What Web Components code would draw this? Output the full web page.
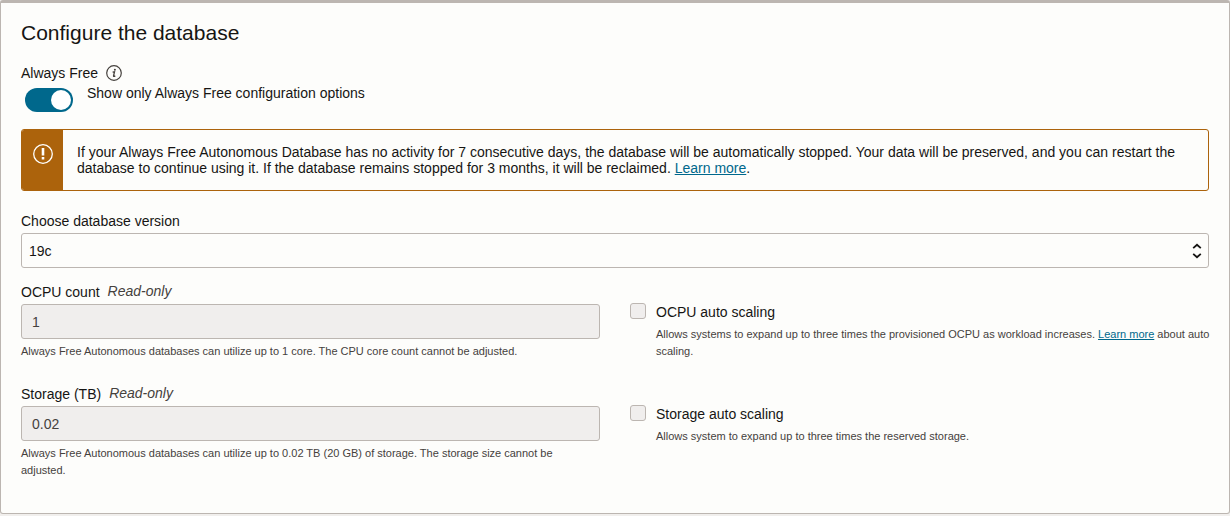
<!DOCTYPE html>
<html lang="en">
<head>
<meta charset="utf-8">
<title>Configure the database</title>
<style>
  body {
    margin: 0;
    background: #f1efed;
    color: #161513;
    font: 14px/16px "Liberation Sans", Arial, sans-serif;
    --panel: #fdfdfb;
    --line: #bcb6b1;
    --muted: #45413d;
    --link: #00688c;
    --disabled: #f0eeed;
    --warning: #ac630c;
  }
  a { color: var(--link); text-underline-offset: 1px; }
</style>
</head>
<body>
<config-panel>
  <span slot="title">Configure the database</span>
  <toggle-field>
    <span slot="label">Always Free</span>
    Show only Always Free configuration options
  </toggle-field>
  <warning-banner>If your Always Free Autonomous Database has no activity for 7 consecutive days, the database will be automatically stopped. Your data will be preserved, and you can restart the database to continue using it. If the database remains stopped for 3 months, it will be reclaimed. <a href="#reclaim">Learn more</a>.</warning-banner>
  <select-field options="19c">Choose database version</select-field>
  <field-grid>
    <readonly-field value="1">OCPU count
      <span slot="help">Always Free Autonomous databases can utilize up to 1 core. The CPU core count cannot be adjusted.</span>
    </readonly-field>
    <check-field>OCPU auto scaling
      <span slot="help">Allows systems to expand up to three times the provisioned OCPU as workload increases. <a href="#scaling">Learn more</a> about auto scaling.</span>
    </check-field>
    <readonly-field value="0.02">Storage (TB)
      <span slot="help">Always Free Autonomous databases can utilize up to 0.02 TB (20 GB) of storage. The storage size cannot be adjusted.</span>
    </readonly-field>
    <check-field>Storage auto scaling
      <span slot="help">Allows system to expand up to three times the reserved storage.</span>
    </check-field>
  </field-grid>
</config-panel>

<script>
const define = (name, html, setup) => {
  const template = document.createElement('template');
  template.innerHTML = html;
  customElements.define(name, class extends HTMLElement {
    constructor() {
      super();
      this.attachShadow({ mode: 'open' }).append(template.content.cloneNode(true));
    }
    connectedCallback() {
      if (setup) setup(this, this.shadowRoot);
    }
  });
};

define('config-panel', `
  <style>
    :host { display: block; }
    section {
      padding: 18px 20px 34px;
      border: 1px solid var(--line);
      border-top-width: 3px;
      border-radius: 3px;
      background: var(--panel);
    }
    h2 { margin: 0 0 20px; font-size: 21px; line-height: 24px; font-weight: 400; }
  </style>
  <section>
    <h2><slot name="title"></slot></h2>
    <slot></slot>
  </section>`);

define('toggle-field', `
  <style>
    :host { display: block; }
    .caption { display: flex; align-items: center; gap: 8px; height: 16px; }
    button { display: block; margin: 0; padding: 0; border: 0; background: none; color: var(--muted); }
    svg { display: block; }
    .control { display: flex; align-items: flex-start; gap: 14px; padding: 4px 4px 0; }
    input {
      appearance: none;
      flex: none;
      display: flex;
      justify-content: flex-end;
      box-sizing: border-box;
      width: 48px;
      height: 24px;
      margin: 3px 0 0;
      padding: 2px;
      border-radius: 12px;
      background: var(--link);
    }
    input::before { content: ""; width: 20px; height: 20px; border-radius: 50%; background: #fff; }
    input:not(:checked) { justify-content: flex-start; background: #8b8580; }
  </style>
  <div class="caption">
    <slot name="label"></slot>
    <button type="button" aria-label="About Always Free">
      <svg width="16" height="16" viewBox="0 0 16 16" fill="none" stroke="currentColor">
        <circle cx="8" cy="8" r="7.3" stroke-width="1.2"/>
        <circle cx="8.9" cy="4.7" r="1" fill="currentColor" stroke="none"/>
        <path d="M6.6 7.1 8.5 6.8 7.5 11.1Q7.5 11.7 9.3 10.8" stroke-width="1.3"/>
      </svg>
    </button>
  </div>
  <div class="control">
    <input id="toggle" type="checkbox" role="switch" checked>
    <label for="toggle"><slot></slot></label>
  </div>`);

define('warning-banner', `
  <style>
    :host {
      display: flex;
      margin: 17px 0 22px;
      overflow: hidden;
      border: 1px solid var(--warning);
      border-radius: 3px;
    }
    .mark { flex: none; box-sizing: border-box; width: 41px; padding: 14px 0 0 11px; background: var(--warning); color: #fff; }
    svg { display: block; }
    p { margin: 0; padding: 14px; }
  </style>
  <div class="mark">
    <svg width="20" height="20" viewBox="0 0 20 20" fill="none" stroke="currentColor" role="img" aria-label="Warning">
      <circle cx="10" cy="10" r="9.3" stroke-width="1.3"/>
      <path d="M10 4V11.5M10 13V15.4" stroke-width="2.6"/>
    </svg>
  </div>
  <p><slot></slot></p>`);

define('select-field', `
  <style>
    :host { display: block; margin-bottom: 16px; }
    label { display: block; margin-bottom: 4px; }
    .box { display: grid; align-items: center; }
    select, svg { grid-area: 1 / 1; }
    select {
      appearance: none;
      box-sizing: border-box;
      width: 100%;
      height: 35px;
      margin: 0;
      padding: 0 32px 0 7px;
      border: 1px solid var(--line);
      border-radius: 3px;
      background: var(--panel);
      color: inherit;
      font: inherit;
    }
    svg { justify-self: end; margin-right: 7px; pointer-events: none; }
  </style>
  <label for="choice"><slot></slot></label>
  <div class="box">
    <select id="choice"></select>
    <svg width="10" height="16" viewBox="0 0 10 16" fill="none" stroke="currentColor" stroke-width="1.8" aria-hidden="true">
      <path d="M1.2 5.2 5 1.8 8.8 5.2M1.2 10.8 5 14.2 8.8 10.8"/>
    </svg>
  </div>`,
  (host, root) => {
    root.querySelector('select').replaceChildren(
      ...host.getAttribute('options').split(',').map(name => new Option(name)));
  });

define('field-grid', `
  <style>
    :host { display: grid; grid-template-columns: 1fr 1fr; gap: 26px 30px; }
  </style>
  <slot></slot>`);

define('readonly-field', `
  <style>
    :host { display: block; }
    .caption { display: flex; gap: 8px; margin-bottom: 4px; }
    em { line-height: 14px; color: var(--muted); }
    input {
      display: block;
      box-sizing: border-box;
      width: 100%;
      height: 35px;
      margin: 0 0 4px;
      padding: 0 10px;
      border: 1px solid var(--line);
      border-radius: 3px;
      background: var(--disabled);
      color: var(--muted);
      font: inherit;
    }
    .help { padding-right: 8px; font-size: 11px; line-height: 17px; color: var(--muted); }
  </style>
  <div class="caption"><label for="value"><slot></slot></label><em>Read-only</em></div>
  <input id="value" type="text" readonly aria-describedby="help">
  <div class="help" id="help"><slot name="help"></slot></div>`,
  (host, root) => { root.querySelector('input').value = host.getAttribute('value'); });

define('check-field', `
  <style>
    :host { display: grid; grid-template-columns: 16px 1fr; gap: 6px 10px; align-content: start; padding-top: 19px; }
    input {
      appearance: none;
      box-sizing: border-box;
      width: 16px;
      height: 16px;
      margin: 0;
      border: 1px solid var(--line);
      border-radius: 3px;
      background: var(--disabled);
    }
    label { padding-top: 1px; }
    .help { grid-column: 2; margin-right: -4px; font-size: 11px; line-height: 17px; color: var(--muted); }
  </style>
  <input id="check" type="checkbox" disabled aria-describedby="help">
  <label for="check"><slot></slot></label>
  <div class="help" id="help"><slot name="help"></slot></div>`);
</script>
</body>
</html>
